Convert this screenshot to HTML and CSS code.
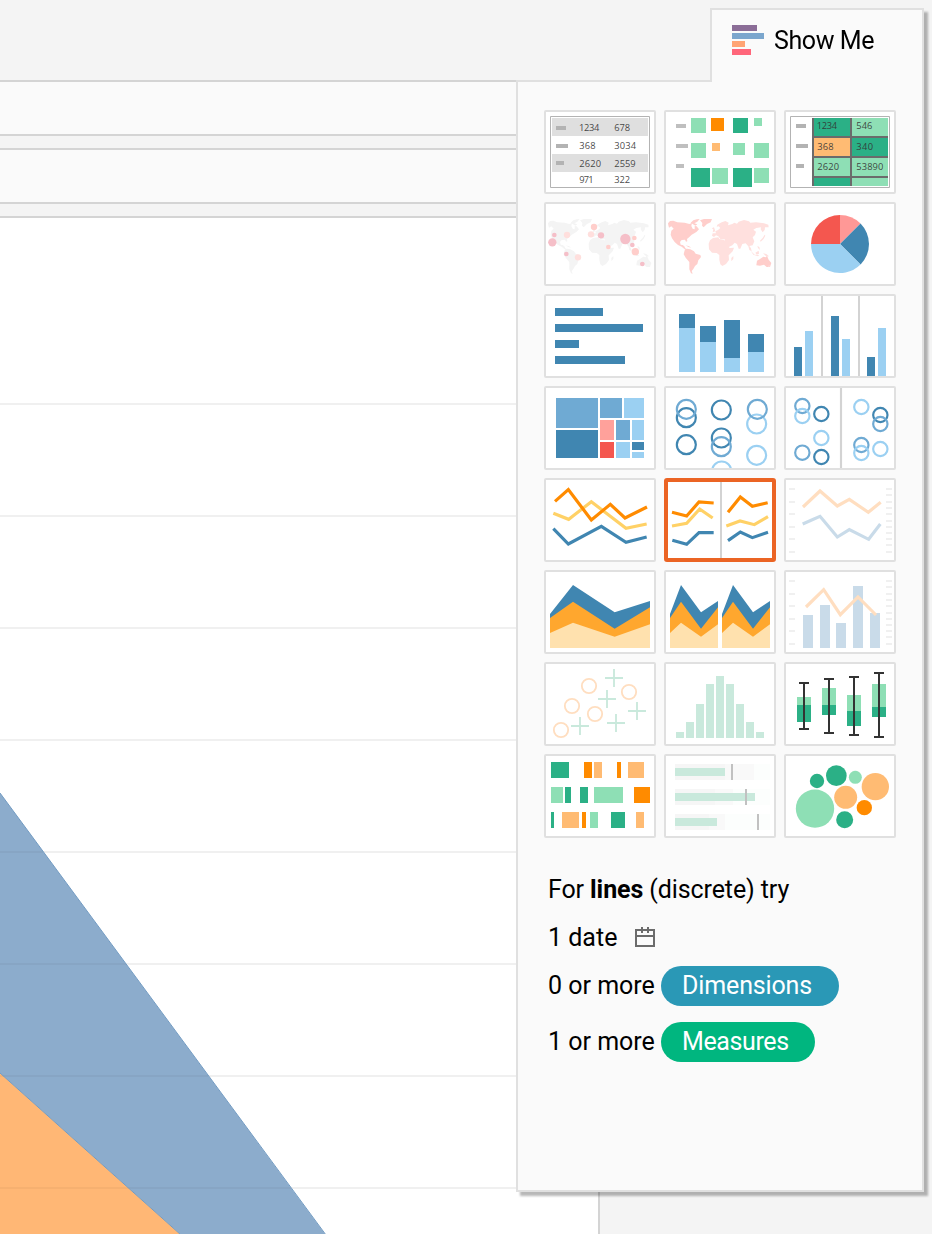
FILE: index.html
```html
<!DOCTYPE html>
<html lang="en">
<head>
<meta charset="utf-8">
<title>Show Me</title>
<link rel="stylesheet" href="styles.css">
</head>
<body>
<div class="app">
  <div class="workspace">
    <div class="shelf"></div>
    <div class="shelf"></div>
    <div class="canvas">
      <svg class="chart" viewBox="0 218 598 1016">
        <path class="grid-line" d="M0 404H598M0 516H598M0 628H598M0 740H598M0 852H598M0 964H598M0 1076H598M0 1188H598"/>
        <path fill="#8caccc" d="M0 793L325 1234H180L0 1073Z"/>
        <path fill="#ffb775" d="M0 1073L180 1234H0Z"/>
        <path fill="none" stroke="#729bc2" d="M0 793L326 1235M0 1073L181 1235"/>
        <path fill="none" stroke="#000" stroke-opacity=".035" stroke-width="2" d="M0 852H43M0 964H126M0 1076H208M0 1188H291"/>
      </svg>
    </div>
  </div>

  <aside class="panel">
    <header class="tab">
      <svg class="logo" viewBox="0 0 32 30"><path fill="#8b6d97" d="M0 0h25v6H0z"/><path fill="#7ba6cd" d="M0 8h32v6H0z"/><path fill="#ffa474" d="M0 16h13v6H0z"/><path fill="#ff667a" d="M0 24h19v6H0z"/></svg>
      <span>Show Me</span>
    </header>
    <div class="panel-body">
      <div class="thumbs">
        <button class="thumb"><svg viewBox="30 36 324 240">
          <path fill="#fff" stroke="#b3b3b3" stroke-width="3" d="M43.500 49.500h297v213h-297z"/>
          <path fill="#dfdfdf" d="M48 54h288v54H48zM48 162h288v54H48z"/>
          <path fill="#b3b3b3" d="M60 78h30v12H60zM60 132h36v12H60zM60 183h24v12H60z"/>
          <g class="num"><text x="129" y="93" textLength="61">1234</text><text x="235" y="93" textLength="47">678</text><text x="130" y="147" textLength="49">368</text><text x="235" y="147" textLength="65">3034</text><text x="130" y="200" textLength="65">2620</text><text x="235" y="200" textLength="64">2559</text><text x="130" y="249" textLength="43">971</text><text x="235" y="249" textLength="47">322</text></g>
        </svg></button>
        <button class="thumb"><svg viewBox="390 36 324 240">
          <path fill="#bfbfbf" d="M420 72h30v12h-30zM420 132h36v12h-36zM420 192h24v12h-24z"/>
          <path fill="#8edfb5" d="M465 54h45v45h-45zM654 54h24v24h-24zM465 129h45v45h-45zM591 129h36v36h-36zM654 129h45v45h-45zM528 204h48v48h-48zM654 204h45v45h-45z"/>
          <path fill="#2bb086" d="M591 54h45v45h-45zM465 204h57v57h-57zM591 204h57v57h-57z"/>
          <path fill="#ff8b00" d="M525 54h39v39h-39z"/><path fill="#ffbb73" d="M528 129h24v24h-24z"/>
        </svg></button>
        <button class="thumb"><svg viewBox="750 36 324 240">
          <path fill="#fff" stroke="#b3b3b3" stroke-width="3" d="M763.500 49.500h297v213h-297z"/>
          <path fill="#b3b3b3" d="M780 72h30v12h-30zM780 132h36v12h-36zM780 192h24v12h-24z"/>
          <path fill="#6b6b6b" d="M828 54h228v204H828z"/>
          <path fill="#2bb086" d="M834 54h108v54H834zM948 114h108v54H948zM834 234h108v24H834z"/>
          <path fill="#8edfb5" d="M948 54h108v54H948zM834 174h108v54H834zM948 174h108v54H948zM948 234h108v24H948z"/>
          <path fill="#ffbb73" d="M834 114h108v54H834z"/>
          <g class="num"><text x="842" y="87" textLength="61">1234</text><text x="961" y="87" textLength="48">546</text><text x="844" y="151" textLength="49">368</text><text x="961" y="151" textLength="50">340</text><text x="844" y="210" textLength="65">2620</text><text x="961" y="210" textLength="81">53890</text></g>
        </svg></button>

        <button class="thumb"><svg viewBox="30 24 324 240">
          <g fill="#f4f4f4" transform="translate(-360 0)">
            <path id="west" d="M396 82L402 75 412 74 424 79 446 80 460 84 468 81 466 90 470 98 476 100 476 90 482 91 489 100 482 107 475 112 467 116 460 123 453 129 454 136 450 137 447 131 437 132 432 138 434 146 440 147 445 151 448 157 454 160 448 161 437 152 426 147 416 138 408 127 404 116 406 104 413 98 406 91 399 95 397 88ZM464 80L472 73 482 70 491 69 484 77 475 82 484 85 478 89 470 84ZM492 73L504 69 528 69 524 79 513 84 503 94 498 89 499 81ZM446 163L453 158 463 160 474 166 479 173 493 177 495 183 487 193 484 204 477 210 472 219 467 225 470 233 465 232 460 220 460 198 449 185 443 175ZM449 148L459 151 466 155 457 153ZM661 208L663 194 672 189 682 182 689 184 693 179 698 191 706 201 702 213 692 213 684 206 672 209Z"/>
            <path id="east" d="M528 119L530 112 540 112 538 106 546 102 553 96 548 91 542 92 544 86 557 79 568 75 578 80 576 88 589 84 595 80 603 83 608 77 624 72 639 76 643 80 660 79 684 82 697 86 698 94 687 94 686 102 680 109 674 100 675 94 661 96 652 101 660 107 657 117 650 124 655 136 650 148 640 150 645 157 647 166 640 162 637 151 629 142 619 144 613 158 608 158 603 144 596 140 589 148 577 154 568 137 566 130 553 129 547 121 540 118 534 123ZM522 133L531 126 547 124 550 129 565 132 573 145 581 156 594 155 590 166 578 178 579 192 570 204 559 210 553 205 550 191 550 177 542 171 528 170 519 160 518 143ZM586 186L592 180 592 189 586 196ZM530 109L532 100 527 97 534 94 538 106ZM672 134L680 126 686 116 688 119 682 130 674 137ZM644 164L656 176 670 178 666 181 652 176ZM658 170L668 164 669 173 662 176ZM681 172L691 174 699 181 692 182ZM664 150L670 153 672 162 666 156ZM699 207L702 211 696 214Z"/>
          </g>
          <g fill="#ffdfdd"><circle cx="93" cy="117" r="9.500"/><circle cx="165" cy="115" r="9.500"/><circle cx="126" cy="184" r="9.500"/></g>
          <g fill="#ffcecb"><circle cx="174" cy="93" r="9.500"/><circle cx="217" cy="153" r="7"/><circle cx="295" cy="126" r="7"/><circle cx="298" cy="167" r="11"/></g>
          <g fill="#f5bfc8"><circle cx="49" cy="139" r="12.500"/><circle cx="55" cy="117" r="7"/><circle cx="91" cy="174" r="7"/><circle cx="195" cy="118" r="9.500"/><circle cx="268" cy="129" r="15.500"/><circle cx="289" cy="147" r="7"/><circle cx="319" cy="204" r="7"/></g>
        </svg></button>
        <button class="thumb"><svg viewBox="390 24 324 240"><use href="#west" fill="#ffcecb"/><use href="#east" fill="#ffe0de"/></svg></button>
        <button class="thumb"><svg viewBox="750 24 324 240">
          <path fill="#ff9896" d="M912 144V57A87 87 0 0 1 973.500 82.500Z"/><path fill="#4086b1" d="M912 144L973.500 82.500A87 87 0 0 1 973.500 205.500Z"/><path fill="#9bd0f2" d="M912 144L973.500 205.500A87 87 0 0 1 825 144Z"/><path fill="#f4574f" d="M912 144H825A87 87 0 0 1 912 57Z"/>
        </svg></button>

        <button class="thumb"><svg viewBox="30 24 324 240"><path fill="#4086b1" d="M57 60h144v24H57zM57 108h264v24H57zM57 156h72v24H57zM57 204h210v24H57z"/></svg></button>
        <button class="thumb"><svg viewBox="390 24 324 240">
          <path fill="#4086b1" d="M429 78h48v42h-48zM492 114h48v48h-48zM564 96h48v114h-48zM636 138h48v54h-48z"/>
          <path fill="#9bd0f2" d="M429 120h48v132h-48zM492 162h48v90h-48zM564 210h48v42h-48zM636 192h48v60h-48z"/>
        </svg></button>
        <button class="thumb"><svg viewBox="750 24 324 240">
          <path fill="#d3d3d3" d="M855 24h6v240h-6zM966 24h6v240h-6z"/>
          <path fill="#4086b1" d="M774 177h24v87h-24zM885 84h24v180h-24zM993 207h24v57h-24z"/>
          <path fill="#9bd0f2" d="M807 129h24v135h-24zM918 153h24v111h-24zM1026 120h24v144h-24z"/>
        </svg></button>

        <button class="thumb"><svg viewBox="30 24 324 240">
          <path fill="#6faad3" d="M60 54h126v90H60zM192 54h66v60h-66zM240 120h42v60h-42z"/>
          <path fill="#4086b1" d="M60 150h126v84H60zM288 186h36v24h-36z"/>
          <path fill="#9bd0f2" d="M264 54h60v60h-60zM288 120h36v60h-36zM240 186h42v48h-42zM288 216h36v18h-36z"/>
          <path fill="#ffa19b" d="M192 120h42v60h-42z"/><path fill="#f4574f" d="M192 186h42v48h-42z"/>
        </svg></button>
        <button class="thumb"><svg class="rings" viewBox="390 24 324 240">
          <g stroke="#4086b1"><circle cx="451" cy="113" r="28.500"/><circle cx="451" cy="194" r="28.500"/><circle cx="556" cy="90" r="28.500"/><circle cx="556" cy="174" r="28.500"/></g>
          <g stroke="#9bd0f2"><circle cx="662" cy="132" r="28.500"/><circle cx="662" cy="226" r="28.500"/><circle cx="557" cy="273" r="28.500"/></g>
          <g stroke="#6faad3"><circle cx="451" cy="88" r="28.500"/><circle cx="664" cy="88" r="28.500"/><circle cx="556" cy="200" r="28.500"/></g>
        </svg></button>
        <button class="thumb"><svg class="rings" viewBox="750 24 324 240">
          <path stroke="#d3d3d3" d="M915 24V264"/>
          <g stroke="#4086b1"><circle cx="856" cy="102" r="21.500"/><circle cx="856" cy="231" r="21.500"/><circle cx="1033" cy="105" r="21.500"/></g>
          <g stroke="#6faad3"><circle cx="799" cy="78" r="21.500"/><circle cx="799" cy="218" r="21.500"/><circle cx="976" cy="195" r="21.500"/><circle cx="1033" cy="132" r="21.500"/></g>
          <g stroke="#9bd0f2"><circle cx="799" cy="108" r="21.500"/><circle cx="856" cy="174" r="21.500"/><circle cx="976" cy="81" r="21.500"/><circle cx="976" cy="219" r="21.500"/><circle cx="1033" cy="207" r="21.500"/></g>
        </svg></button>

        <button class="thumb"><svg class="lines" viewBox="30 24 324 240">
          <path stroke="#ffd166" d="M52 124L98 142 166 89 270 169 332 156"/>
          <path stroke="#ff8b00" d="M57 88L97 53 166 144 223 97 267 138 333 105"/>
          <path stroke="#4086b1" d="M52 170L97 216 196 163 270 211 332 195"/>
        </svg></button>
        <button class="thumb selected" aria-pressed="true"><svg class="lines" viewBox="396 30 312 228">
          <path stroke="#d3d3d3" stroke-width="6" d="M555 30V258"/>
          <path stroke="#ffd166" d="M408 162L452 154 491 111 530 138M571 162L612 147 655 158 696 134"/>
          <path stroke="#ff8b00" d="M408 121L452 132 489 90 533 93M576 121L613 75 649 103 695 92"/>
          <path stroke="#4086b1" d="M409 205L452 217 489 182H533M576 206L613 180 649 197 696 181"/>
        </svg></button>
        <button class="thumb"><svg class="lines" viewBox="750 24 324 240">
          <path id="ticks" stroke="#f0f0f0" stroke-width="6" d="M759 51h18M759 90h18M759 126h18M759 165h18M759 201h18M759 240h18M1050 51h18M1050 69h18M1050 90h18M1050 108h18M1050 126h18M1050 147h18M1050 165h18M1050 183h18M1050 201h18M1050 219h18M1050 240h18"/>
          <path stroke="#ffdec0" d="M801 105L852 57 904 102 940 82 997 121 1034 91"/>
          <path stroke="#c9dbe9" d="M800 156L852 133 904 195 940 173 998 202 1033 156"/>
        </svg></button>

        <button class="thumb"><svg viewBox="30 24 324 240">
          <path fill="#4086b1" d="M42 150L111 63 236 145 342 111V252H42Z"/><path fill="#ffa72e" d="M42 162L111 113 236 194 342 130V252H42Z"/><path fill="#ffe1ae" d="M42 207L111 176 236 218 342 181V252H42Z"/>
        </svg></button>
        <button class="thumb"><svg viewBox="390 24 324 240">
          <g id="area"><path fill="#4086b1" d="M402 150L435 63 495 145 546 111V252H402Z"/><path fill="#ffa72e" d="M402 162L435 113 495 194 546 130V252H402Z"/><path fill="#ffe1ae" d="M402 207L435 176 495 218 546 181V252H402Z"/></g>
          <use href="#area" x="156"/>
        </svg></button>
        <button class="thumb"><svg class="lines" viewBox="750 24 324 240">
          <use href="#ticks"/>
          <path fill="#c9dbe9" d="M801 153h30v99h-30zM852 123h30v129h-30zM900 177h30v75h-30zM951 66h30v186h-30zM1002 147h30v105h-30z"/>
          <path stroke="#ffdec0" d="M810 129L863 77 913 152 966 99 1020 153"/>
        </svg></button>

        <button class="thumb"><svg viewBox="30 24 324 240" fill="none" stroke-width="5.500">
          <g stroke="#ffdec0"><circle cx="159" cy="90" r="21.500"/><circle cx="279" cy="108" r="21.500"/><circle cx="108" cy="150" r="21.500"/><circle cx="177" cy="174" r="21.500"/><circle cx="75" cy="222" r="21.500"/></g>
          <path stroke="#c9e9dc" d="M207 66h54M234 39v54M186 129h54M213 102v54M276 165h54M303 138v54M213 201h54M240 174v54M105 210h54M132 183v54"/>
        </svg></button>
        <button class="thumb"><svg viewBox="390 24 324 240"><path fill="#c9e9dc" d="M420 228h24v18h-24zM450 198h24v48h-24zM480 144h24v102h-24zM510 84h24v162h-24zM540 60h24v186h-24zM570 84h24v162h-24zM600 144h24v102h-24zM630 198h24v48h-24zM660 228h24v18h-24z"/></svg></button>
        <button class="thumb"><svg viewBox="750 24 324 240">
          <path fill="#8edfb5" d="M783 123h42v24h-42zM858 96h42v51h-42zM933 117h42v48h-42zM1008 84h42v69h-42z"/>
          <path fill="#2bb086" d="M783 147h42v51h-42zM858 147h42v30h-42zM933 165h42v45h-42zM1008 153h42v30h-42z"/>
          <path fill="none" stroke="#333" stroke-width="6" d="M789 81h30M804 81V219M789 219h30M864 69h30M879 69V231M864 231h30M939 63h30M954 63V237M939 237h30M1014 51h30M1029 51V243M1014 243h30"/>
        </svg></button>

        <button class="thumb"><svg viewBox="30 24 324 240">
          <path fill="#2bb086" d="M45 42h54v48H45zM87 117h18v48H87zM132 117h24v48h-24zM45 192h9v48h-9zM225 192h42v48h-42z"/>
          <path fill="#8edfb5" d="M45 117h36v48H45zM174 117h87v48h-87zM162 192h24v48h-24z"/>
          <path fill="#ff8b00" d="M144 42h24v48h-24zM243 42h12v48h-12zM294 117h48v48h-48zM138 192h12v48h-12z"/>
          <path fill="#ffbb73" d="M174 42h24v48h-24zM276 42h48v48h-48zM78 192h51v48H78zM300 192h24v48h-24z"/>
        </svg></button>
        <button class="thumb"><svg viewBox="390 24 324 240">
          <path fill="#fcfefd" d="M417 48h285v48H417zM417 123h285v48H417zM417 198h285v48H417z"/>
          <path fill="#f9f9f9" d="M417 48h237v48H417zM417 123h174v48H417zM417 198h150v48H417z"/>
          <path fill="#f6f6f6" d="M417 48h150v48H417zM417 123h120v48H417zM417 198h102v48H417z"/>
          <path fill="#c9e9dc" d="M417 60h150v24H417zM417 135h240v24H417zM417 210h126v24H417z"/>
          <path fill="#c1c1c1" d="M585 48h6v48h-6zM627 123h6v48h-6zM663 198h6v48h-6z"/>
        </svg></button>
        <button class="thumb"><svg viewBox="750 24 324 240">
          <g fill="#2bb086"><circle cx="843" cy="99" r="21.500"/><circle cx="901" cy="83" r="31"/><circle cx="926" cy="215" r="25.500"/></g>
          <g fill="#8edfb5"><circle cx="837" cy="182" r="57.500"/><circle cx="958" cy="88" r="19.500"/></g>
          <g fill="#ffbb73"><circle cx="929" cy="148" r="34.500"/><circle cx="1018" cy="116" r="41"/></g><circle cx="985" cy="179" r="23" fill="#ff8b00"/>
        </svg></button>
      </div>

      <div class="hints">
        <div class="hint intro">For <b>lines</b> (discrete) try</div>
        <div class="hint date">1 date
          <svg class="calendar" viewBox="0 0 20 21" fill="none" stroke="#6b6b6b"><path stroke-width="2" d="M1 3H19V19H1zM1 9H19"/><path stroke-width="2" d="M7 0V6M13 0V6"/></svg>
        </div>
        <div class="hint">0 or more <span class="pill dimensions">Dimensions</span></div>
        <div class="hint last">1 or more <span class="pill measures">Measures</span></div>
      </div>
    </div>
  </aside>
</div>
</body>
</html>
```
FILE: styles.css
```css
* { box-sizing: border-box; }

body {
  margin: 0;
  background: #f4f4f4;
  color: #000;
  font-family: Roboto, "Liberation Sans", sans-serif;
}

.app {
  position: relative;
  width: 932px;
  height: 1234px;
  overflow: hidden;
}

.workspace {
  display: flex;
  flex-direction: column;
  gap: 12px;
  width: 600px;
  height: 1234px;
  padding-top: 80px;
}

.shelf {
  height: 56px;
  background: #fafafa;
  border: solid #d4d4d4;
  border-width: 2px 0;
}

.canvas {
  flex: 1;
  background: #fff;
  border: solid #d4d4d4;
  border-width: 2px 2px 0 0;
}

.chart {
  display: block;
  width: 598px;
  height: 1016px;
}

.grid-line { stroke: #f0f0f0; stroke-width: 2; }

/* Show Me panel floats over the worksheet */
.panel {
  position: absolute;
  top: 8px;
  left: 516px;
  width: 408px;
  height: 1184px;
  display: flex;
  flex-direction: column;
  filter: drop-shadow(4px 4px 1px rgba(0, 0, 0, 0.28));
}

.tab {
  display: flex;
  gap: 10px;
  z-index: 1;
  width: 214px;
  height: 74px;
  margin-left: auto;
  padding: 15px 0 0 20px;
  background: #fafafa;
  border: 2px solid #e0e0e0;
  border-bottom: 0;
  font-size: 25px;
  line-height: 32px;
  letter-spacing: -0.4px;
}

.logo { width: 32px; height: 30px; }

.panel-body {
  flex: 1;
  margin-top: -2px;
  padding: 28px 26px 0;
  background: #fafafa;
  border: 2px solid #e0e0e0;
}

.thumbs {
  display: grid;
  grid-template-columns: repeat(3, 112px);
  grid-auto-rows: 84px;
  gap: 8px;
}

.thumb {
  display: block;
  padding: 0;
  overflow: hidden;
  background: #fff;
  border: 2px solid #e0e0e0;
  border-radius: 2px;
}

.thumb.selected { border: 4px solid #eb6424; border-radius: 3px; }

.thumb svg { display: block; width: 100%; height: 100%; }

.rings { fill: none; stroke-width: 6.5; }

.lines path { stroke-width: 9.5; }
.lines path[stroke] { fill: none; }
.lines path[stroke-width="6"] { stroke-width: 6; }

.num {
  font-size: 28px;
  font-family: "Open Sans", sans-serif;
  fill: #333;
  fill-opacity: 0.9;
}

.hints { padding: 32px 0 0 4px; }

.hint {
  display: flex;
  align-items: center;
  height: 40px;
  margin-bottom: 8px;
  font-size: 25px;
  line-height: 40px;
  white-space: pre;
}

.intro { display: block; letter-spacing: -0.1px; }

.date { white-space: normal; gap: 18px; }

.hint.last { margin-top: 16px; }

.calendar { width: 20px; height: 21px; margin-top: -2px; }

.pill {
  height: 40px;
  padding-left: 21px;
  border-radius: 20px;
  color: #fff;
}

.dimensions { width: 178px; background: #2a98b6; letter-spacing: -0.15px; }
.measures { width: 154px; background: #00b67f; letter-spacing: -0.4px; }
```
